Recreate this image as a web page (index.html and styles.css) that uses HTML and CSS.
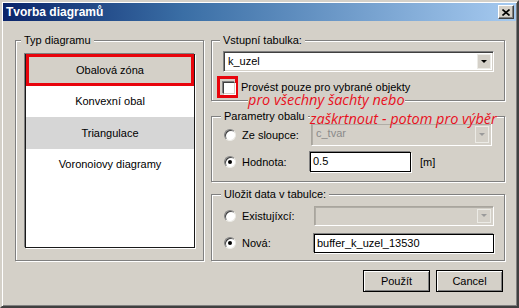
FILE: index.html
```html
<!DOCTYPE html>
<html lang="cs">
  <head>
    <meta charset="UTF-8" />
    <title>Tvorba diagramů</title>
    <link rel="stylesheet" href="styles.css">
  </head>
  <body>
    <div class="window">
      <div class="titlebar">
        <span class="title">Tvorba diagramů</span>
        <span class="close-btn">
          <svg width="8" height="7" viewBox="0 0 8 7">
            <path d="M0.5 0.5 L7.5 6.5 M7.5 0.5 L0.5 6.5" stroke="#000" stroke-width="1.6" />
          </svg>
        </span>
      </div>

      <div class="content">
        <fieldset class="group group-type">
          <legend>Typ diagramu</legend>
          <ul class="listbox">
            <li class="item item-selected">Obalová zóna</li>
            <li class="item">Konvexní obal</li>
            <li class="item item-grey">Triangulace</li>
            <li class="item">Voronoiovy diagramy</li>
          </ul>
        </fieldset>

        <div class="right-col">
          <fieldset class="group group-input">
            <legend>Vstupní tabulka:</legend>
            <div class="combo">
              <span class="combo-text">k_uzel</span>
              <span class="combo-btn"><span class="arrow"></span></span>
            </div>
            <div class="check-row">
              <span class="mark-box"><span class="checkbox"></span></span>
              <span>Provést pouze pro vybrané objekty</span>
            </div>
          </fieldset>

          <fieldset class="group group-params">
            <legend>Parametry obalu</legend>
            <div class="opt-row">
              <span class="radio"></span>
              <span class="opt-label">Ze sloupce:</span>
              <div class="combo combo-disabled combo-col">
                <span class="combo-text">c_tvar</span>
                <span class="combo-btn"><span class="arrow"></span></span>
              </div>
            </div>
            <div class="opt-row opt-row-second">
              <span class="radio radio-checked"></span>
              <span class="opt-label">Hodnota:</span>
              <div class="textbox textbox-value">0.5</div>
              <span class="unit">[m]</span>
            </div>
          </fieldset>

          <fieldset class="group group-save">
            <legend>Uložit data v tabulce:</legend>
            <div class="opt-row">
              <span class="radio"></span>
              <span class="opt-label">Existujíxcí:</span>
              <div class="combo combo-disabled combo-wide">
                <span class="combo-text"></span>
                <span class="combo-btn"><span class="arrow"></span></span>
              </div>
            </div>
            <div class="opt-row opt-row-second">
              <span class="radio radio-checked"></span>
              <span class="opt-label">Nová:</span>
              <div class="textbox textbox-wide">buffer_k_uzel_13530</div>
            </div>
          </fieldset>
        </div>
      </div>

      <div class="buttons">
        <button class="btn">Použít</button>
        <button class="btn">Cancel</button>
      </div>

      <!-- red notes drawn over the dialog -->
      <span class="note note-all">pro všechny šachty nebo</span>
      <span class="note note-check">zaškrtnout - potom pro výběr</span>
    </div>
  </body>
</html>
```

FILE: styles.css
```css
* {
  margin: 0;
  padding: 0;
  box-sizing: border-box;
}

body {
  background: #d4d0c8;
  font-family: "Liberation Sans", Arial, sans-serif;
  font-size: 11px;
  color: #000;
}

.window {
  position: relative;
  width: 519px;
  height: 308px;
  background: #d4d0c8;
  border: 2px solid;
  border-color: #d4d0c8 #404040 #404040 #d4d0c8;
  box-shadow: inset 1px 1px 0 #fff, inset -1px -1px 0 #808080;
}

.titlebar {
  display: flex;
  align-items: center;
  justify-content: space-between;
  height: 18px;
  margin: 1px 1px 0 1px;
  padding: 0 2px 0 3px;
  background: linear-gradient(to right, #0a246a, #3a6ea5 35%, #a6caf0);
}

.title {
  color: #fff;
  font-weight: bold;
  font-size: 12px;
}

.close-btn {
  display: flex;
  align-items: center;
  justify-content: center;
  width: 16px;
  height: 14px;
  background: #d4d0c8;
  border: 1px solid;
  border-color: #fff #404040 #404040 #fff;
  box-shadow: inset -1px -1px 0 #808080;
}

.content {
  display: flex;
  gap: 7px;
  padding: 13px 0 0 13px;
}

.group {
  border: 1px solid #808080;
  box-shadow: inset 1px 1px 0 #fff, 1px 1px 0 #fff;
}

.group legend {
  line-height: 13px;
  padding: 0 3px;
  margin-left: -3px;
  background: #d4d0c8;
}

.group-type {
  width: 189px;
  padding: 7px 8px 9px 9px;
}

.group-type legend {
  margin-left: -4px;
}

.listbox {
  list-style: none;
  width: 170px;
  height: 194px;
  background: #fff;
  border: 1px solid #1a1a1a;
  box-shadow: -1px -1px 0 #808080, 1px 1px 0 #fff;
}

.item {
  height: 31px;
  line-height: 31px;
  text-align: center;
}

.item-selected {
  background: #d4d0c8;
  box-shadow: inset 0 0 0 3px #e8040c;
  height: 32px;
  margin-top: -1px;
  line-height: 32px;
}

.item-grey {
  background: #d6d6d6;
  height: 32px;
  line-height: 32px;
}

.right-col {
  display: flex;
  flex-direction: column;
  width: 294px;
}

.group-input {
  padding: 4px 10px 5px 11px;
}

.group-params {
  margin-top: 9px;
  padding: 0 10px 9px 12px;
}

.group-save {
  margin-top: 6px;
  padding: 3px 9px 7px 12px;
}

.combo {
  display: flex;
  height: 21px;
  background: #fff;
  border: 1px solid;
  border-color: #808080 #fff #fff #808080;
  box-shadow: inset 1px 1px 0 #404040, inset -1px -1px 0 #d4d0c8;
  padding: 2px;
}

.combo-text {
  flex: 1;
  line-height: 15px;
  padding-left: 2px;
}

.combo-btn {
  display: flex;
  align-items: center;
  justify-content: center;
  width: 14px;
  background: #d4d0c8;
  border: 1px solid #ecebe6;
}

.arrow {
  width: 0;
  height: 0;
  border-left: 3px solid transparent;
  border-right: 3px solid transparent;
  border-top: 3px solid #000;
}

.combo-disabled {
  background: #d4d0c8;
  color: #8a8a8a;
  box-shadow: inset 1px 1px 0 #b0ada6, inset -1px -1px 0 #d4d0c8;
  border-color: #a9a59d #fff #fff #a9a59d;
}

.combo-disabled .arrow {
  border-top-color: #9a9a9a;
}

.combo-col {
  width: 181px;
  height: 23px;
}

.combo-wide {
  width: 180px;
  height: 20px;
}

.check-row {
  display: flex;
  align-items: center;
  height: 16px;
  margin-top: 7px;
}

.mark-box {
  display: flex;
  width: 21px;
  height: 22px;
  margin-left: -6px;
  margin-right: 3px;
  padding: 3px 0 0 3px;
  border: 3px solid #e8040c;
}

.checkbox {
  width: 12px;
  height: 12px;
  background: #fff;
  border: 1px solid;
  border-color: #404040 #d4d0c8 #d4d0c8 #404040;
  box-shadow: -1px -1px 0 #808080, 1px 1px 0 #fff;
}

.opt-row {
  display: flex;
  align-items: center;
  height: 23px;
}

.opt-row-second {
  height: 20px;
  margin-top: 6px;
}

.radio {
  position: relative;
  width: 12px;
  height: 12px;
  border-radius: 50%;
  background: #fff;
  border: 1px solid;
  border-color: #808080 #ecebe6 #ecebe6 #808080;
  box-shadow: inset 1px 1px 0 #404040;
  margin-right: 6px;
}

.radio-checked::after {
  content: "";
  position: absolute;
  left: 3px;
  top: 3px;
  width: 4px;
  height: 4px;
  border-radius: 50%;
  background: #000;
}

.group-params .opt-label {
  width: 69px;
}

.group-save .opt-label {
  width: 72px;
}

.textbox {
  height: 20px;
  line-height: 17px;
  padding-left: 2px;
  background: #fff;
  border: 1px solid #000;
  box-shadow: -1px -1px 0 #808080, 1px 1px 0 #fff;
}

.textbox-value {
  width: 101px;
  margin-left: -1px;
}

.textbox-wide {
  width: 180px;
  height: 19px;
}

.unit {
  margin-left: 9px;
}

.buttons {
  display: flex;
  justify-content: flex-end;
  gap: 6px;
  padding: 9px 14px 0 0;
}

.btn {
  width: 67px;
  height: 22px;
  font-family: "Liberation Sans", Arial, sans-serif;
  font-size: 11px;
  background: #d4d0c8;
  border: 1px solid #000;
  box-shadow: inset 1px 1px 0 #fff, inset -1px -1px 0 #808080;
}

.note {
  position: absolute;
  font-family: "Open Sans", sans-serif;
  font-style: italic;
  font-size: 14.5px;
  line-height: 10px;
  color: #e8101e;
  background: #d4d0c8;
  white-space: nowrap;
}

.note-all {
  left: 246px;
  top: 93px;
}

.note-check {
  left: 308px;
  top: 112px;
}
```
